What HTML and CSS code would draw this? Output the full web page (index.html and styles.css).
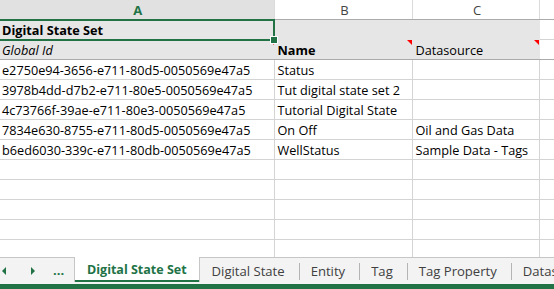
FILE: index.html
```html
<!DOCTYPE html>
<html lang="en">
<head>
    <meta charset="UTF-8">
    <title>Digital State Set</title>
    <link rel="stylesheet" href="styles.css">
</head>
<body>
    <div class="sheet">
        <div class="grid-wrap">
            <table class="grid">
                <colgroup>
                    <col class="col-a">
                    <col class="col-b">
                    <col class="col-c">
                    <col class="col-d">
                </colgroup>
                <tr class="colhead">
                    <td class="sel">A</td>
                    <td>B</td>
                    <td>C</td>
                    <td></td>
                </tr>
                <tr class="band top">
                    <td class="title">Digital State Set</td>
                    <td></td>
                    <td></td>
                    <td class="plain"></td>
                </tr>
                <tr class="band bottom">
                    <td class="italic note">Global Id</td>
                    <td class="bold note">Name</td>
                    <td class="note">Datasource</td>
                    <td class="plain"></td>
                </tr>
                <tr><td>e2750e94-3656-e711-80d5-0050569e47a5</td><td>Status</td><td></td><td></td></tr>
                <tr><td>3978b4dd-d7b2-e711-80e5-0050569e47a5</td><td>Tut digital state set 2</td><td></td><td></td></tr>
                <tr><td>4c73766f-39ae-e711-80e3-0050569e47a5</td><td>Tutorial Digital State</td><td></td><td></td></tr>
                <tr><td>7834e630-8755-e711-80d5-0050569e47a5</td><td>On Off</td><td>Oil and Gas Data</td><td></td></tr>
                <tr><td>b6ed6030-339c-e711-80db-0050569e47a5</td><td>WellStatus</td><td>Sample Data - Tags</td><td></td></tr>
                <tr><td></td><td></td><td></td><td></td></tr>
                <tr><td></td><td></td><td></td><td></td></tr>
                <tr><td></td><td></td><td></td><td></td></tr>
                <tr><td></td><td></td><td></td><td></td></tr>
                <tr><td></td><td></td><td></td><td></td></tr>
            </table>
            <div class="selection"><span class="handle"></span></div>
        </div>
        <div class="tabbar">
            <div class="nav">
                <span class="arrow left"></span>
                <span class="arrow right"></span>
                <span class="dots">...</span>
            </div>
            <div class="tab active">Digital State Set</div>
            <div class="tab">Digital State</div>
            <div class="tab">Entity</div>
            <div class="tab">Tag</div>
            <div class="tab">Tag Property</div>
            <div class="tab">Datasource</div>
        </div>
        <div class="status"></div>
    </div>
</body>
</html>
```

FILE: styles.css
```css
body {
    margin: 0;
    background-color: white;
    font-family: "Open Sans", "Noto Sans", sans-serif;
    overflow: hidden;
}
.sheet {
    width: 554px;
    height: 289px;
    display: flex;
    flex-direction: column;
    overflow: hidden;
}
.grid-wrap {
    position: relative;
    height: 257px;
    flex-shrink: 0;
    overflow: hidden;
}
.grid {
    border-collapse: collapse;
    table-layout: fixed;
    width: 600px;
    font-size: 12.7px;
    color: #000;
}
.col-a { width: 274px; }
.col-b { width: 138px; }
.col-c { width: 127px; }
.col-d { width: 61px; }
.grid td {
    height: 19px;
    padding: 0 0 0 3px;
    border-right: 1px solid #d4d4d4;
    border-bottom: 1px solid #d4d4d4;
    white-space: nowrap;
    overflow: hidden;
    vertical-align: bottom;
    line-height: 18px;
    position: relative;
}
.grid td:first-child {
    padding-left: 2px;
}
.colhead td {
    text-align: center;
    color: #444;
    font-size: 13px;
    vertical-align: middle;
    border-bottom: 1px solid #ababab;
    border-right: 1px solid #dadada;
}
.colhead td.sel {
    background-color: #e1e1e1;
    color: #217346;
    font-weight: bold;
    border-bottom: 1px solid #217346;
}
.band td {
    background-color: #e7e6e6;
    border-right-color: #e7e6e6;
}
.band td.plain {
    background-color: white;
    border-right-color: #d4d4d4;
}
.band.top td {
    border-bottom-color: #e7e6e6;
}
.band.top td.plain {
    border-bottom-color: #d4d4d4;
}
.band.bottom td {
    border-bottom: 1px solid #ababab;
}
.title {
    font-weight: bold;
}
.italic {
    font-style: italic;
}
.bold {
    font-weight: bold;
}
.note::after {
    content: "";
    position: absolute;
    top: 0;
    right: 0;
    border-top: 5px solid #ff0000;
    border-left: 5px solid transparent;
}
.selection {
    position: absolute;
    left: -2px;
    top: 19px;
    width: 273px;
    height: 18px;
    border: 2px solid #217346;
}
.handle {
    position: absolute;
    right: -5px;
    bottom: -5px;
    width: 6px;
    height: 6px;
    background-color: #217346;
    border: 1px solid white;
}
.tabbar {
    height: 26px;
    flex-shrink: 0;
    border-top: 1px solid #c6c6c6;
    background-color: #f3f3f3;
    display: flex;
    align-items: stretch;
    font-size: 13.1px;
    color: #404040;
}
.nav {
    width: 74px;
    display: flex;
    align-items: center;
    flex-shrink: 0;
}
.arrow {
    width: 0;
    height: 0;
    border-top: 4px solid transparent;
    border-bottom: 4px solid transparent;
}
.arrow.left {
    margin-left: 2px;
    border-right: 4px solid #217346;
}
.arrow.right {
    margin-left: 25px;
    border-left: 4px solid #217346;
}
.dots {
    margin-left: 18px;
    color: #217346;
    font-weight: bold;
    font-size: 13px;
    line-height: 13px;
    padding-bottom: 2px;
}
.tab {
    padding: 0 14px 0 12px;
    display: flex;
    align-items: center;
    white-space: nowrap;
    position: relative;
    flex-shrink: 0;
}
.tab + .tab::before {
    content: "";
    position: absolute;
    left: 0;
    top: 5px;
    bottom: 4px;
    border-left: 1px solid #b4b4b4;
}
.tab.active {
    background-color: white;
    color: #217346;
    font-weight: bold;
    font-size: 12.5px;
    margin-top: -1px;
    border-left: 1px solid #c6c6c6;
    border-right: 1px solid #c6c6c6;
    padding: 0 12px;
    box-shadow: inset 0 -2px 0 #217346;
    margin-bottom: 2px;
}
.tab.active + .tab::before {
    display: none;
}
.status {
    height: 5px;
    flex-shrink: 0;
    background-color: #217346;
}
```
